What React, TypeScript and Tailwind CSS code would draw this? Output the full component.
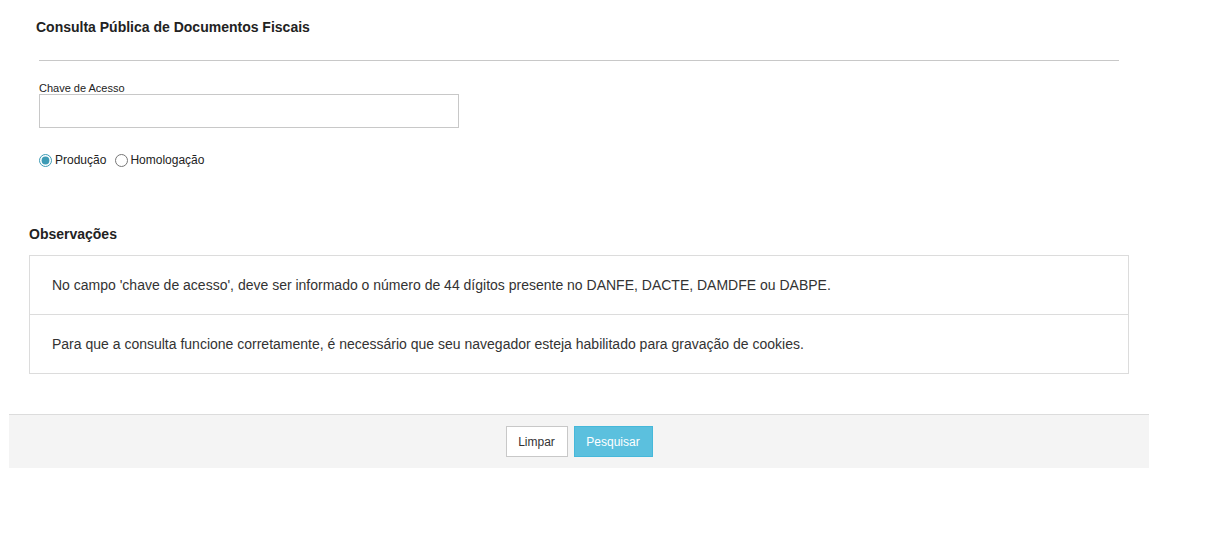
import { useState } from "react";

export default function App() {
    const [ambiente, setAmbiente] = useState("producao");
    const [chave, setChave] = useState("");

    return (
        <div
            className="min-h-[543px] bg-white text-[#333]"
            style={{ fontFamily: '"Liberation Sans", Arial, sans-serif' }}
        >
            <div className="ml-[9px] w-[1140px]">
                {/* Header */}
                <div className="pl-[27px] pt-[18px]">
                    <h1 className="text-[14px] leading-[18px] font-bold text-[#222]">
                        Consulta Pública de Documentos Fiscais
                    </h1>
                </div>
                <div className="pl-[30px] pr-[30px] pt-[24px]">
                    <hr className="border-0 border-t border-[#c8c8c8]" />
                </div>

                {/* Form */}
                <div className="pl-[30px] pt-[21px]">
                    <label className="block text-[11px] leading-[12px] text-[#222]">
                        Chave de Acesso
                    </label>
                    <input
                        type="text"
                        value={chave}
                        onChange={(e) => setChave(e.target.value)}
                        className="block w-[420px] h-[34px] border border-[#c8c8c8] bg-white px-2 text-[12px] outline-none"
                    />

                    <div className="mt-[25px] flex items-center text-[12px] leading-[14px] text-[#222]">
                        <label className="flex items-center cursor-pointer">
                            <input
                                type="radio"
                                name="ambiente"
                                checked={ambiente === "producao"}
                                onChange={() => setAmbiente("producao")}
                                className="m-0 mr-[3px] w-[13px] h-[13px] accent-[#3d9bb5]"
                            />
                            Produção
                        </label>
                        <label className="flex items-center cursor-pointer ml-[9px]">
                            <input
                                type="radio"
                                name="ambiente"
                                checked={ambiente === "homologacao"}
                                onChange={() => setAmbiente("homologacao")}
                                className="m-0 mr-[2px] w-[13px] h-[13px] accent-[#3d9bb5]"
                            />
                            Homologação
                        </label>
                    </div>
                </div>

                {/* Observações */}
                <div className="pl-[20px] pr-[20px] pt-[59px]">
                    <h2 className="text-[14px] leading-[16px] font-bold text-[#222]">
                        Observações
                    </h2>
                    <div className="mt-[13px] border border-[#dcdcdc]">
                        <div className="h-[59px] flex items-center px-[22px] text-[14px] text-[#333] border-b border-[#dcdcdc]">
                            No campo 'chave de acesso', deve ser informado o número de 44 dígitos presente no DANFE, DACTE, DAMDFE ou DABPE.
                        </div>
                        <div className="h-[58px] flex items-center px-[22px] text-[14px] text-[#333]">
                            Para que a consulta funcione corretamente, é necessário que seu navegador esteja habilitado para gravação de cookies.
                        </div>
                    </div>
                </div>

                {/* Footer */}
                <div className="mt-[40px] h-[54px] bg-[#f4f4f4] border-t border-[#dcdcdc] flex items-center justify-center gap-[6px]">
                    <button
                        type="button"
                        onClick={() => setChave("")}
                        className="h-[31px] w-[62px] bg-white border border-[#c8c8c8] text-[12px] text-[#333] cursor-pointer"
                    >
                        Limpar
                    </button>
                    <button
                        type="button"
                        className="h-[31px] w-[79px] bg-[#5bc0de] border border-[#46b8da] text-[12px] text-white cursor-pointer"
                    >
                        Pesquisar
                    </button>
                </div>
            </div>
        </div>
    );
}
